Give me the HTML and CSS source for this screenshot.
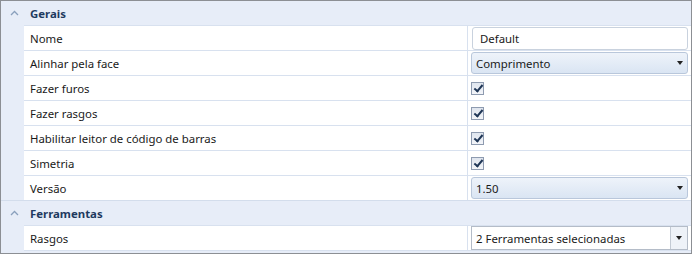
FILE: index.html
```html
<!DOCTYPE html>
<html lang="pt">
  <head>
    <meta charset="UTF-8" />
    <title>Propriedades</title>
    <link rel="stylesheet" href="styles.css">
  </head>
  <body>
    <div class="grid">
      <div class="category">
        <svg class="chev" width="9" height="6" viewBox="0 0 9 6"><polyline points="1,5 4.5,1.5 8,5" /></svg>
        <span>Gerais</span>
      </div>
      <div class="rows">
        <div class="row">
          <div class="name">Nome</div>
          <div class="value"><div class="textbox">Default</div></div>
        </div>
        <div class="row">
          <div class="name">Alinhar pela face</div>
          <div class="value"><div class="dropdown"><span>Comprimento</span><i class="arrow"></i></div></div>
        </div>
        <div class="row">
          <div class="name">Fazer furos</div>
          <div class="value"><span class="check"></span></div>
        </div>
        <div class="row">
          <div class="name">Fazer rasgos</div>
          <div class="value"><span class="check"></span></div>
        </div>
        <div class="row">
          <div class="name">Habilitar leitor de código de barras</div>
          <div class="value"><span class="check"></span></div>
        </div>
        <div class="row">
          <div class="name">Simetria</div>
          <div class="value"><span class="check"></span></div>
        </div>
        <div class="row">
          <div class="name">Versão</div>
          <div class="value"><div class="dropdown"><span>1.50</span><i class="arrow"></i></div></div>
        </div>
      </div>

      <div class="category">
        <svg class="chev" width="9" height="6" viewBox="0 0 9 6"><polyline points="1,5 4.5,1.5 8,5" /></svg>
        <span>Ferramentas</span>
      </div>
      <div class="rows">
        <div class="row">
          <div class="name">Rasgos</div>
          <div class="value">
            <div class="combo"><span>2 Ferramentas selecionadas</span><div class="combo-btn"><i class="arrow"></i></div></div>
          </div>
        </div>
      </div>
    </div>
  </body>
</html>
```

FILE: styles.css
```css
body {
  margin: 0;
  font-family: "Noto Sans", "Liberation Sans", sans-serif;
  font-size: 11.4px;
  color: #1a1a1a;
  background: #fff;
}

.grid {
  width: 692px;
  height: 254px;
  box-sizing: border-box;
  border: 1px solid #8c8f94;
  background: #e7edf8;
  overflow: hidden;
}

.category {
  height: 24px;
  display: flex;
  align-items: center;
  font-weight: bold;
  color: #1e3a5f;
}

.category + .rows + .category {
  border-top: 1px solid #d3ddec;
}

.chev {
  margin-left: 9px;
  margin-right: 11px;
}

.chev polyline {
  fill: none;
  stroke: #8aa0bd;
  stroke-width: 1.3;
}

.rows {
  margin-left: 23px;
  background: #fff;
}

.row {
  display: flex;
  height: 24px;
  border-top: 1px solid #d8e1ef;
}

.rows:last-child .row:last-child {
  border-bottom: 1px solid #d8e1ef;
}

.name {
  width: 444px;
  padding-left: 6px;
  box-sizing: border-box;
  border-right: 1px solid #d8e1ef;
  display: flex;
  align-items: center;
  white-space: nowrap;
}

.value {
  width: 222px;
  display: flex;
  align-items: center;
}

.textbox {
  margin: 1px 2px 0 4px;
  width: 216px;
  height: 23px;
  box-sizing: border-box;
  border: 1px solid #c9d2de;
  border-radius: 3px;
  padding-left: 7px;
  display: flex;
  align-items: center;
  align-self: flex-start;
  background: #fff;
}

.dropdown {
  margin-left: 3px;
  width: 217px;
  height: 22px;
  box-sizing: border-box;
  border: 1px solid #b9c7db;
  border-radius: 3px;
  background: linear-gradient(#eef3fa, #dae5f3);
  display: flex;
  align-items: center;
  justify-content: space-between;
  padding: 0 4px 0 4px;
}

.arrow {
  width: 0;
  height: 0;
  border-left: 3.5px solid transparent;
  border-right: 3.5px solid transparent;
  border-top: 4px solid #222;
}

.check {
  margin-left: 3px;
  width: 13px;
  height: 13px;
  box-sizing: border-box;
  border: 1px solid #8e9bb0;
  background: linear-gradient(#dfe5ee, #f3f5f9);
  position: relative;
}

.check::after {
  content: "";
  position: absolute;
  left: 4px;
  top: 0px;
  width: 3px;
  height: 7px;
  border-right: 2px solid #1f3656;
  border-bottom: 2px solid #1f3656;
  transform: rotate(40deg);
}

.combo {
  margin-left: 3px;
  width: 217px;
  height: 24px;
  box-sizing: border-box;
  border: 1px solid #b4bcc8;
  background: #fff;
  display: flex;
  align-items: center;
  justify-content: space-between;
  padding-left: 4px;
}

.combo-btn {
  width: 16px;
  height: 100%;
  border-left: 1px solid #c3cad4;
  background: #eef2f8;
  display: flex;
  align-items: center;
  justify-content: center;
}
```
